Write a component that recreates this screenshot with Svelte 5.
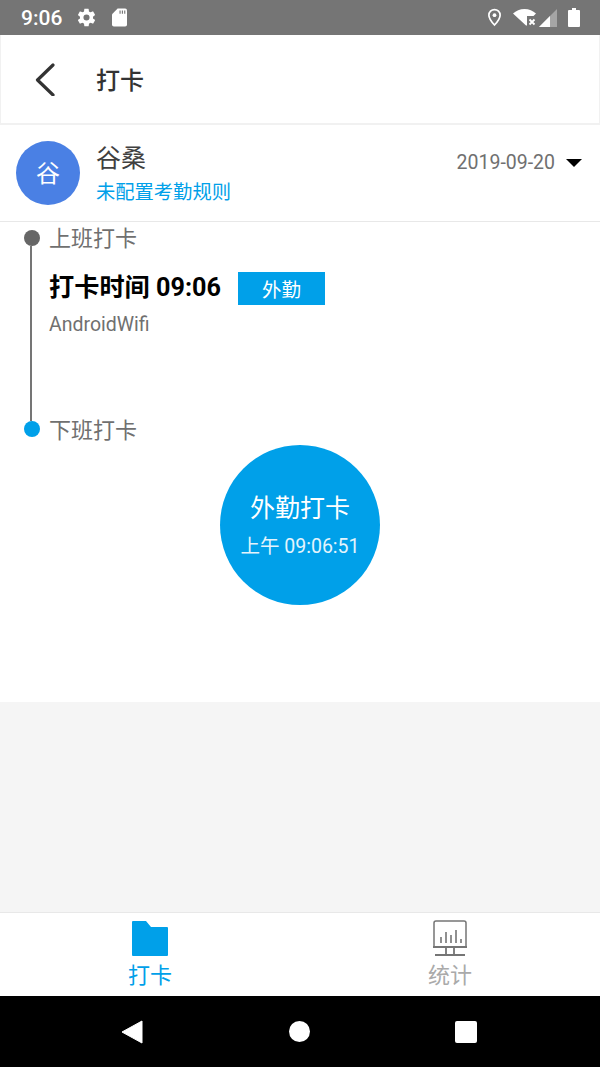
<script>
	const tabs = [
		{ label: '打卡', active: true },
		{ label: '统计', active: false }
	];
</script>

<div class="page">
	<div class="status">
		<span class="clock">9:06</span>
		<svg class="gear" viewBox="0 0 24 24" width="21" height="21">
			<path
				fill="#fff"
				d="M19.4 13c.04-.32.07-.66.07-1s-.03-.68-.07-1l2.1-1.65c.2-.15.25-.42.12-.64l-2-3.46c-.12-.22-.39-.3-.61-.22l-2.49 1c-.52-.4-1.08-.73-1.69-.98l-.38-2.65A.49.49 0 0 0 14 2h-4c-.25 0-.46.18-.49.42l-.38 2.65c-.61.25-1.17.59-1.69.98l-2.49-1c-.23-.09-.49 0-.61.22l-2 3.46c-.13.22-.07.49.12.64L4.57 11c-.04.32-.07.66-.07 1s.03.68.07 1l-2.11 1.65c-.19.15-.24.42-.12.64l2 3.46c.12.22.39.3.61.22l2.49-1c.52.4 1.08.73 1.69.98l.38 2.65c.03.24.24.42.49.42h4c.25 0 .46-.18.49-.42l.38-2.65c.61-.25 1.17-.59 1.69-.98l2.49 1c.23.09.49 0 .61-.22l2-3.46c.12-.22.07-.49-.12-.64L19.4 13zM12 15.5A3.5 3.5 0 1 1 12 8.500a3.500 3.500 0 0 1 0 7z"
			/>
		</svg>
		<svg class="sd" viewBox="0 0 16 19" width="15" height="19">
			<path
				fill="#fff"
				d="M6 0h8a2 2 0 0 1 2 2v15a2 2 0 0 1-2 2H2a2 2 0 0 1-2-2V6z"
			/>
			<path fill="#757575" d="M8 2h1.200v3.500H8zM10.500 2h1.200v3.500h-1.200zM13 2h1.200v3.500H13z" />
		</svg>
		<span class="spacer"></span>
		<svg class="pin" viewBox="0 0 16 20" width="15" height="19">
			<path
				fill="none"
				stroke="#fff"
				stroke-width="1.800"
				d="M8 1.500a6 6 0 0 0-6 6c0 4 6 10.500 6 10.500s6-6.500 6-10.500a6 6 0 0 0-6-6z"
			/>
			<circle cx="8" cy="7.500" r="2" fill="#fff" />
		</svg>
		<svg class="wifi" viewBox="0 0 23 18" width="23" height="18">
			<path fill="#fff" d="M0 4.500C3 1.800 7 0 11.500 0S20 1.800 23 4.500L20.500 7H14v9.500h-1L0 4.500z" />
			<path
				fill="none"
				stroke="#fff"
				stroke-width="1.800"
				d="M16.500 10.500l5 5M21.500 10.500l-5 5"
			/>
		</svg>
		<svg class="signal" viewBox="0 0 18 18" width="18" height="18">
			<path fill="#fff" fill-opacity="0.35" d="M18 0v18H0z" />
			<path fill="#fff" d="M11 7v11H0z" />
		</svg>
		<svg class="battery" viewBox="0 0 12 19" width="12" height="19">
			<path fill="#fff" d="M4 0h4v2h3a1 1 0 0 1 1 1v15a1 1 0 0 1-1 1H1a1 1 0 0 1-1-1V3a1 1 0 0 1 1-1h3z" />
		</svg>
	</div>

	<header class="header">
		<svg class="back" viewBox="0 0 24 34" width="24" height="34">
			<path
				fill="none"
				stroke="#333"
				stroke-width="3.200"
				stroke-linecap="round"
				stroke-linejoin="round"
				d="M19 3L3.500 18 19 33"
			/>
		</svg>
		<h1>打卡</h1>
	</header>

	<section class="user">
		<div class="avatar">谷</div>
		<div class="who">
			<div class="name">谷桑</div>
			<div class="rule">未配置考勤规则</div>
		</div>
		<div class="date">
			<span>2019-09-20</span>
			<i class="caret"></i>
		</div>
	</section>

	<section class="body">
		<div class="timeline">
			<div class="rail">
				<i class="dot gray"></i>
				<i class="line"></i>
			</div>
			<div class="entry">
				<div class="label">上班打卡</div>
				<div class="punch">
					<b>打卡时间 09:06</b>
					<span class="tag">外勤</span>
				</div>
				<div class="wifi-name">AndroidWifi</div>
			</div>
			<div class="rail">
				<i class="dot blue"></i>
			</div>
			<div class="label off">下班打卡</div>
		</div>

		<button class="punch-btn">
			<span class="big">外勤打卡</span>
			<span class="small">上午 09:06:51</span>
		</button>
	</section>

	<div class="filler"></div>

	<nav class="tabs">
		{#each tabs as tab}
			<div class="tab" class:active={tab.active}>
				{#if tab.active}
					<svg viewBox="0 0 36 36" width="36" height="36">
						<path
							fill="#00a0e9"
							d="M0 2a1 1 0 0 1 1-1h13l5 6h16a1 1 0 0 1 1 1v27a1 1 0 0 1-1 1H1a1 1 0 0 1-1-1z"
						/>
					</svg>
				{:else}
					<svg viewBox="0 0 36 36" width="36" height="36">
						<g fill="none" stroke="#757575" stroke-width="1.500">
							<path d="M2 27V3a2 2 0 0 1 2-2h28a2 2 0 0 1 2 2v24" />
							<path d="M1 27h34M3 35h30M14 28v7M22 28v7" stroke-width="1.800" />
							<path d="M9 23v-6M14 23V12M19 23v-8M24 23V10M29 23v-4" stroke-width="1.600" />
						</g>
					</svg>
				{/if}
				<span>{tab.label}</span>
			</div>
		{/each}
	</nav>

	<div class="nav">
		<svg viewBox="0 0 22 24" width="22" height="24">
			<path fill="#fff" stroke="#fff" stroke-width="1" stroke-linejoin="round" d="M21 1v22L1 12z" />
		</svg>
		<i class="home"></i>
		<i class="recent"></i>
	</div>
</div>

<style>
	:global(body) {
		margin: 0;
		background: #fff;
	}
	.page {
		width: 600px;
		height: 1067px;
		display: flex;
		flex-direction: column;
		font-family: Roboto, 'Noto Sans CJK SC', sans-serif;
		overflow: hidden;
	}
	.status {
		height: 35px;
		background: #757575;
		display: flex;
		align-items: center;
		padding: 0 20px 0 21px;
		color: #fff;
		flex: none;
	}
	.clock {
		font-size: 21px;
		font-weight: 500;
	}
	.gear {
		margin-left: 14px;
	}
	.sd {
		margin-left: 15px;
	}
	.spacer {
		flex: 1;
	}
	.wifi {
		margin-left: 11px;
	}
	.signal {
		margin-left: 3px;
	}
	.battery {
		margin-left: 11px;
	}
	.header {
		height: 90px;
		box-sizing: border-box;
		flex: none;
		display: flex;
		align-items: center;
		padding-left: 33px;
		border: 1px solid #f1f1f1;
		border-top: 0;
		border-bottom-width: 2px;
	}
	.header h1 {
		margin: 0 0 2px 38px;
		font-size: 24px;
		font-weight: 500;
		color: #333;
	}
	.user {
		height: 97px;
		box-sizing: border-box;
		flex: none;
		display: flex;
		align-items: center;
		padding: 0 18px 0 16px;
		border-bottom: 1px solid #e8e8e8;
	}
	.avatar {
		width: 64px;
		height: 64px;
		box-sizing: border-box;
		padding-bottom: 3px;
		border-radius: 50%;
		background: #4a80e4;
		color: #fff;
		font-size: 24px;
		display: flex;
		align-items: center;
		justify-content: center;
	}
	.who {
		margin-left: 16px;
		padding-top: 2px;
		flex: 1;
	}
	.name {
		font-size: 25px;
		line-height: 36px;
		color: #404040;
	}
	.rule {
		margin-top: 2px;
		font-size: 19.300px;
		line-height: 28px;
		color: #00a0e9;
	}
	.date {
		display: flex;
		align-items: center;
		align-self: flex-start;
		margin-top: 25px;
		font-size: 19.500px;
		line-height: 26px;
		color: #707070;
	}
	.caret {
		width: 0;
		height: 0;
		margin-left: 11px;
		border-left: 8px solid transparent;
		border-right: 8px solid transparent;
		border-top: 8px solid #000;
	}
	.body {
		height: 480px;
		flex: none;
		box-sizing: border-box;
		padding-top: 3px;
	}
	.timeline {
		display: grid;
		grid-template-columns: 16px 1fr;
		column-gap: 9px;
		padding-left: 24px;
	}
	.rail {
		display: flex;
		flex-direction: column;
		align-items: center;
	}
	.dot {
		width: 16px;
		height: 16px;
		border-radius: 50%;
		margin-top: 5px;
		flex: none;
	}
	.dot.gray {
		background: #666;
	}
	.dot.blue {
		background: #00a0e9;
	}
	.line {
		width: 2px;
		flex: 1;
		background: #757575;
		margin-right: 2px;
		margin-bottom: -5px;
	}
	.label {
		font-size: 22px;
		line-height: 28px;
		color: #707070;
	}
	.label.off {
		padding-top: 1px;
	}
	.entry {
		height: 191px;
	}
	.punch {
		display: flex;
		align-items: center;
		margin-top: 17px;
	}
	.punch b {
		font-size: 25.200px;
		line-height: 32px;
		color: #000;
	}
	.tag {
		margin: 2px 0 0 17px;
		width: 87px;
		height: 33px;
		background: #00a0e9;
		color: #fff;
		font-size: 19.500px;
		display: flex;
		align-items: center;
		justify-content: center;
	}
	.wifi-name {
		margin-top: 8px;
		font-size: 19.500px;
		line-height: 24px;
		color: #707070;
	}
	.punch-btn {
		display: flex;
		flex-direction: column;
		align-items: center;
		justify-content: center;
		box-sizing: border-box;
		width: 160px;
		height: 160px;
		margin: 0 auto;
		padding: 2px 0 0;
		border: 0;
		border-radius: 50%;
		background: #00a0e9;
		color: #fff;
		font-family: inherit;
	}
	.big {
		font-size: 25px;
		line-height: 34px;
	}
	.small {
		margin-top: 8px;
		font-size: 19.500px;
		line-height: 26px;
		color: #e4f4fc;
	}
	.filler {
		flex: 1;
		background: #f5f5f5;
	}
	.tabs {
		height: 84px;
		box-sizing: border-box;
		flex: none;
		display: flex;
		border-top: 1px solid #e8e8e8;
		background: #fff;
	}
	.tab {
		flex: 1;
		display: flex;
		flex-direction: column;
		align-items: center;
		padding-top: 7px;
		color: #aaa;
		font-size: 22px;
		line-height: 30px;
	}
	.tab svg {
		display: block;
		margin-bottom: 5px;
	}
	.tab.active {
		color: #00a0e9;
	}
	.nav {
		height: 71px;
		flex: none;
		background: #000;
		display: flex;
		align-items: center;
		padding: 0 123px 0 121px;
		justify-content: space-between;
	}
	.home {
		width: 21px;
		height: 21px;
		border-radius: 50%;
		background: #fff;
	}
	.recent {
		width: 22px;
		height: 22px;
		border-radius: 2px;
		background: #fff;
	}
</style>
